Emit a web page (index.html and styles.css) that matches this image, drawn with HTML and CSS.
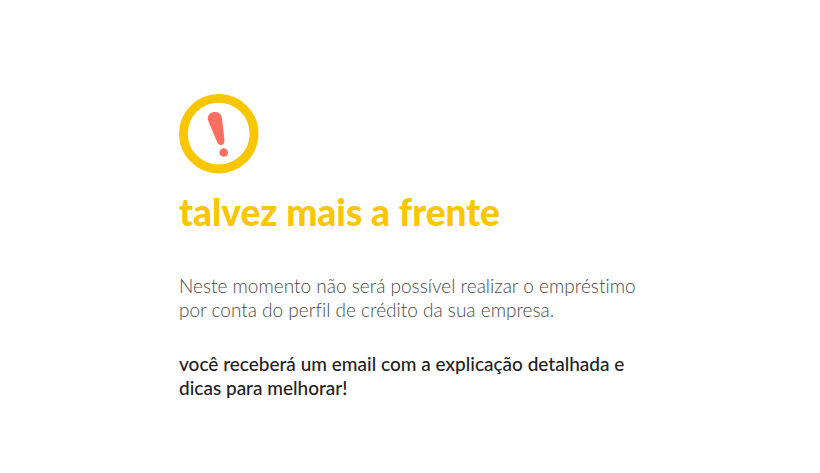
FILE: index.html
```html
<!DOCTYPE html>
<html lang="pt-BR">
<head>
<meta charset="utf-8">
<meta name="viewport" content="width=device-width, initial-scale=1">
<title>talvez mais a frente</title>
<link rel="stylesheet" href="styles.css">
</head>
<body>
<main class="message">
  <svg class="icon" viewBox="0 0 80 80" aria-hidden="true">
    <circle cx="39.700" cy="39.700" r="35.300" fill="none" stroke="#fac600" stroke-width="8.800"/>
    <path d="M29.300 27C27.500 22 31 18 35.500 18C40 17.500 42.500 20.500 43 24.500L45.500 46.500C46 51.500 40.500 52.500 38.500 49Z" fill="#ff6f61"/>
    <circle cx="44.700" cy="58.500" r="4.300" fill="#ff6f61"/>
  </svg>
  <h1 class="title">talvez mais a frente</h1>
  <p class="lead">Neste momento não será possível realizar o empréstimo por conta do perfil de crédito da sua empresa.</p>
  <p class="note">você receberá um email com a explicação detalhada e dicas para melhorar!</p>
</main>
</body>
</html>
```
FILE: styles.css
```css
body {
  margin: 0;
  background: #fff;
  font-family: Lato, sans-serif;
  font-variant-ligatures: no-common-ligatures;
}

.message {
  max-width: 462px;
  margin: 0 auto;
  padding: 94px 0 72px;
}

.icon {
  display: block;
  width: 80px;
  height: 80px;
}

.title {
  margin: 14px 0 38px;
  color: #fac600;
  font-size: 37px;
  font-weight: 900;
  line-height: 48px;
}

.lead,
.note {
  margin: 0;
  font-size: 19px;
  line-height: 24px;
}

.lead {
  margin-bottom: 30px;
  color: #4a4a4a;
  font-weight: 300;
}

.note {
  color: #222;
  font-weight: 500;
}
```
